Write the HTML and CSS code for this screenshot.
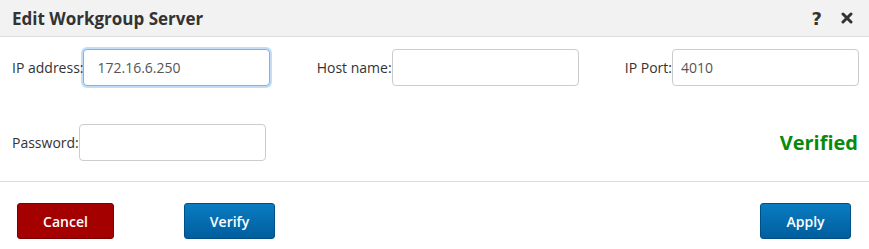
FILE: index.html
```html
<!DOCTYPE html>
<html lang="en">
<head>
  <meta charset="UTF-8" />
  <title>Edit Workgroup Server</title>
  <link rel="stylesheet" href="styles.css">
</head>
<body>
  <div class="dialog">
    <div class="dialog-header">
      <h1 class="dialog-title">Edit Workgroup Server</h1>
      <div class="header-icons">
        <span class="icon-help">?</span>
        <svg class="icon-close" width="12" height="12" viewBox="0 0 12 12">
          <path d="M2 2 L10 10 M10 2 L2 10" stroke="#333" stroke-width="3" stroke-linecap="round"/>
        </svg>
      </div>
    </div>

    <div class="dialog-body">
      <div class="row">
        <div class="field field-ip">
          <label>IP address:</label>
          <input type="text" class="text-input focused" value="172.16.6.250">
        </div>
        <div class="field field-host">
          <label>Host name:</label>
          <input type="text" class="text-input">
        </div>
        <div class="field field-port">
          <label>IP Port:</label>
          <input type="text" class="text-input" value="4010">
        </div>
      </div>
      <div class="row row-second">
        <div class="field">
          <label>Password:</label>
          <input type="password" class="text-input">
        </div>
        <div class="status-ok">Verified</div>
      </div>
    </div>

    <div class="dialog-footer">
      <div class="footer-left">
        <button class="btn btn-cancel">Cancel</button>
        <button class="btn btn-blue">Verify</button>
      </div>
      <button class="btn btn-blue">Apply</button>
    </div>
  </div>
</body>
</html>
```

FILE: styles.css
```css
body {
  margin: 0;
  font-family: "Open Sans", "Noto Sans", Arial, sans-serif;
  font-size: 14px;
  color: #333;
  background: #fff;
}

.dialog {
  width: 869px;
}

/* Cabecera */
.dialog-header {
  height: 36px;
  background: #f2f2f2;
  border-bottom: 1px solid #dcdcdc;
  display: flex;
  align-items: center;
  justify-content: space-between;
  padding: 0 16px 0 12px;
}

.dialog-title {
  margin: 0;
  font-size: 17px;
  font-weight: bold;
  color: #333;
}

.header-icons {
  display: flex;
  align-items: center;
  gap: 19px;
}

.icon-help {
  font-family: "DejaVu Sans", sans-serif;
  font-weight: bold;
  font-size: 18px;
  color: #333;
}

.dialog-body {
  padding: 12px 10px 20px 12px;
  border-bottom: 1px solid #dcdcdc;
}

.row {
  display: flex;
  justify-content: space-between;
  align-items: center;
}

.row-second {
  margin-top: 38px;
}

.field {
  display: flex;
  align-items: center;
}

/* la etiqueta queda por encima del halo del campo activo */
.field label {
  color: #333;
  position: relative;
  z-index: 1;
}

.text-input {
  width: 187px;
  height: 37px;
  box-sizing: border-box;
  border: 1px solid #ccc;
  border-radius: 4px;
  padding: 0 8px;
  font-family: inherit;
  font-size: 14px;
  color: #555;
  outline: none;
}

.field-ip .text-input {
  padding-left: 13px;
}

.text-input.focused {
  border-color: #7fb2ea;
  box-shadow: 0 0 0 2px #c3ddf8;
}

.status-ok {
  color: #0a8a0a;
  font-size: 20px;
  font-weight: bold;
  margin-right: 1px;
}

/* Botones */
.dialog-footer {
  display: flex;
  justify-content: space-between;
  align-items: center;
  padding: 21px 18px 10px 17px;
}

.footer-left {
  display: flex;
  gap: 70px;
}

.btn {
  height: 36px;
  border-radius: 3px;
  color: #fff;
  font-family: inherit;
  font-size: 14px;
  font-weight: 600;
  cursor: pointer;
}

.btn-cancel {
  width: 97px;
  background: #a40000;
  border: 1px solid #7d0000;
}

.btn-blue {
  width: 91px;
  background: linear-gradient(#0a7cc1, #005e9e);
  border: 1px solid #004f86;
}
```
